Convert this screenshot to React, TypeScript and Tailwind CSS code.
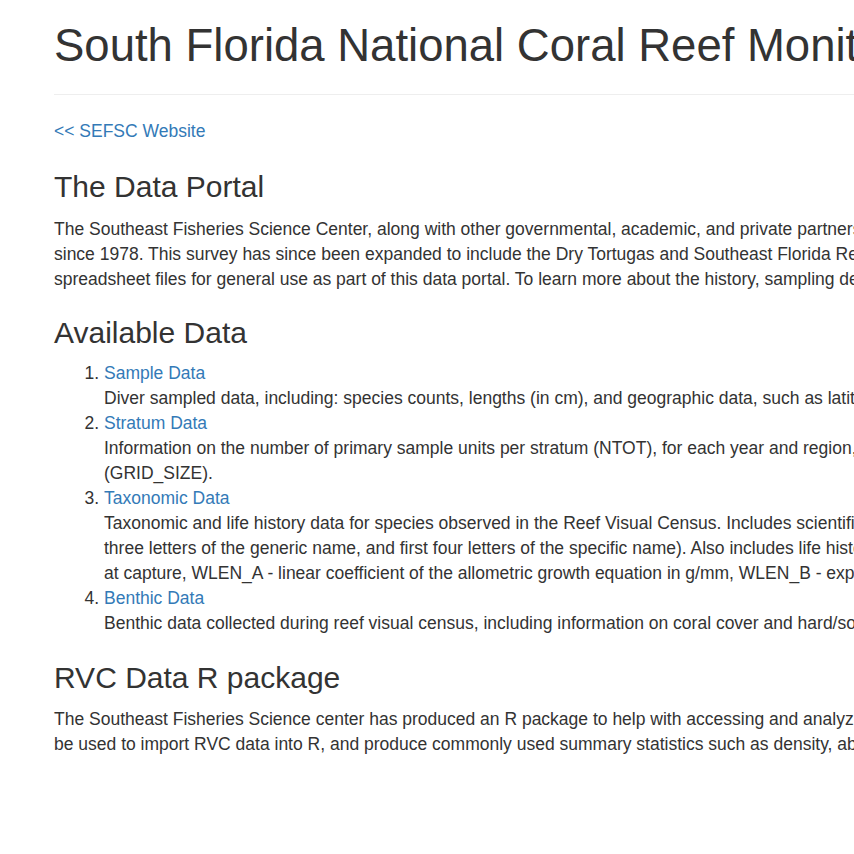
import React from "react";

const L = ({ children }: { children: React.ReactNode }) => (
  <div className="whitespace-nowrap">{children}</div>
);

export default function App() {
  return (
    <div className="w-[854px] h-[854px] overflow-hidden bg-white text-[#333333] text-[17.5px] leading-[25px]" style={{ fontFamily: '"Liberation Sans", Arial, Helvetica, sans-serif' }}>
      <div className="pl-[54px] w-[1600px]">
        <div className="pt-[21px] pb-[11px] border-b border-[#eeeeee] mb-[24px]">
          <h1 className="text-[45.5px] leading-[49.5px] mb-[12.5px] whitespace-nowrap">
            South Florida National Coral Reef Monitoring Program: Reef Visual Census
          </h1>
        </div>
        <p className="mb-[12.5px]">
          <a href="#" className="text-[#337ab7]">&lt;&lt; SEFSC Website</a>
        </p>

        <h3 className="mt-[26px] mb-[13.5px] text-[30px] leading-[33px]">The Data Portal</h3>
        <div className="mb-[12.5px]">
          <L>The Southeast Fisheries Science Center, along with other governmental, academic, and private partners, has been conducting the Reef Visual Census (RVC) in the Florida Keys</L>
          <L>since 1978. This survey has since been expanded to include the Dry Tortugas and Southeast Florida Reef Tract. The data collected by the RVC are available as</L>
          <L>spreadsheet files for general use as part of this data portal. To learn more about the history, sampling design, and methods of the survey, please visit the website.</L>
        </div>

        <h3 className="mt-[24px] mb-[12.5px] text-[30px] leading-[33px]">Available Data</h3>
        <ol className="list-decimal pl-[50px] mb-[13.5px]">
          <li>
            <a href="#" className="text-[#337ab7]">Sample Data</a>
            <L>Diver sampled data, including: species counts, lengths (in cm), and geographic data, such as latitude and longitude.</L>
          </li>
          <li>
            <a href="#" className="text-[#337ab7]">Stratum Data</a>
            <L>Information on the number of primary sample units per stratum (NTOT), for each year and region, as well as the size of the primary sample unit</L>
            <L>(GRID_SIZE).</L>
          </li>
          <li>
            <a href="#" className="text-[#337ab7]">Taxonomic Data</a>
            <L>Taxonomic and life history data for species observed in the Reef Visual Census. Includes scientific name, common name, and species code (first</L>
            <L>three letters of the generic name, and first four letters of the specific name). Also includes life history parameters: LC - length</L>
            <L>at capture, WLEN_A - linear coefficient of the allometric growth equation in g/mm, WLEN_B - exponent of the allometric growth equation.</L>
          </li>
          <li>
            <a href="#" className="text-[#337ab7]">Benthic Data</a>
            <L>Benthic data collected during reef visual census, including information on coral cover and hard/soft relief.</L>
          </li>
        </ol>

        <h3 className="mt-[25px] mb-[12.5px] text-[30px] leading-[33px]">RVC Data R package</h3>
        <div className="mb-[12.5px]">
          <L>The Southeast Fisheries Science center has produced an R package to help with accessing and analyzing RVC data. This package can</L>
          <L>be used to import RVC data into R, and produce commonly used summary statistics such as density, abundance, and occurrence.</L>
        </div>
      </div>
    </div>
  );
}
